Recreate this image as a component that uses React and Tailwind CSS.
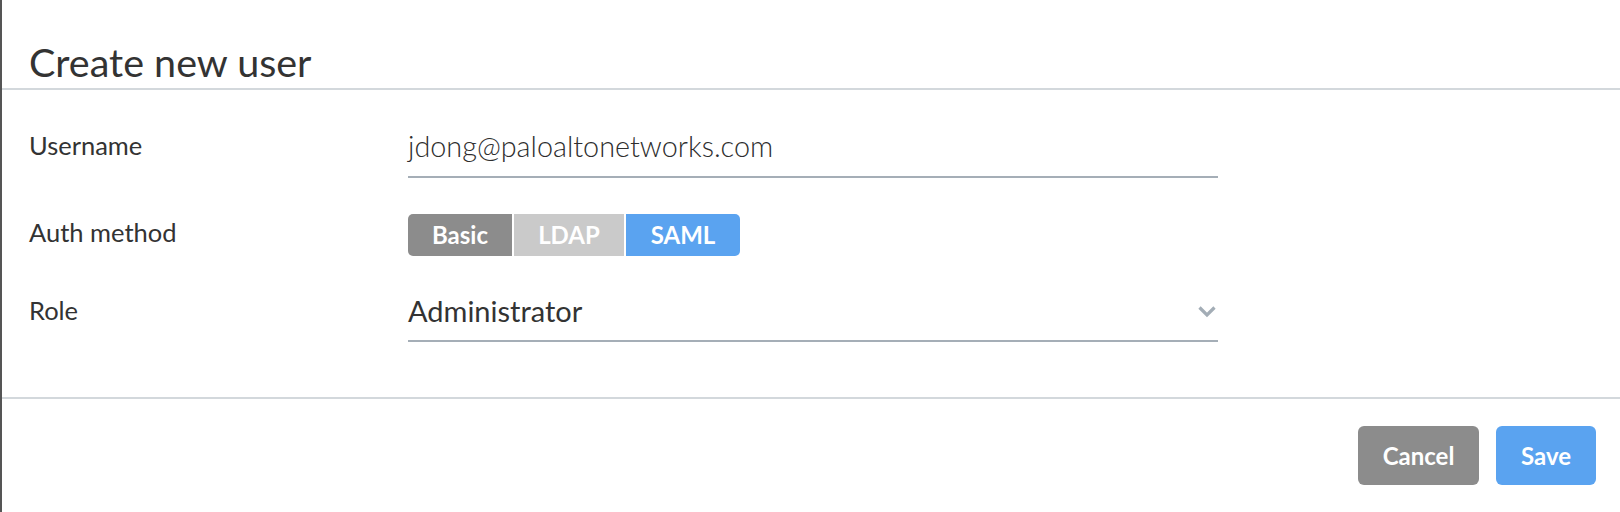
import React from "react";

function Chevron() {
  return (
    <svg width="20" height="13" viewBox="0 0 20 13" fill="none">
      <path d="M2.5 2.5 L10 10 L17.5 2.5" stroke="#a3adb6" strokeWidth="3.2" strokeLinecap="butt" strokeLinejoin="miter" />
    </svg>
  );
}

export default function App() {
  return (
    <div
      className="w-[1620px] h-[512px] bg-white border-l-2 border-[#555555] flex flex-col text-[#333333]"
      style={{ fontFamily: "Lato, 'Open Sans', sans-serif" }}
    >
      <div className="h-[90px] pt-[38px] pl-[27px] border-b-2 border-[#d3d8dc] shrink-0">
        <h1 className="text-[39.5px] leading-[47px] font-normal">Create new user</h1>
      </div>

      <div className="h-[309px] shrink-0 border-b-2 border-[#d3d8dc] pl-[27px] flex flex-col">
        <div className="mt-[38px] flex items-start">
          <div className="w-[379px] pt-[2px] text-[25.5px] leading-[31px]">Username</div>
          <div className="w-[810px] pt-[1px] pb-[12px] border-b-2 border-[#a5aeb7] text-[28.8px] leading-[35px] font-light text-[#2e2e2e]">
            jdong@paloaltonetworks.com
          </div>
        </div>

        <div className="mt-[36px] flex items-start">
          <div className="w-[379px] pt-[3px] text-[25.5px] leading-[31px]">Auth method</div>
          <div className="flex gap-[2px] h-[42px] text-white font-bold text-[24px]">
            <div className="w-[104px] flex items-center justify-center bg-[#8c8c8c] rounded-l-[5px]">Basic</div>
            <div className="w-[110px] flex items-center justify-center bg-[#cacaca]">LDAP</div>
            <div className="w-[114px] flex items-center justify-center bg-[#5aa3f0] rounded-r-[5px]">SAML</div>
          </div>
        </div>

        <div className="mt-[37px] flex items-start">
          <div className="w-[379px] pt-[2px] text-[25.5px] leading-[31px]">Role</div>
          <div className="w-[810px] pb-[12px] border-b-2 border-[#a5aeb7] flex items-center justify-between">
            <span className="text-[29px] leading-[35px]">Administrator</span>
            <span className="mr-[1px] mt-[2px] flex"><Chevron /></span>
          </div>
        </div>
      </div>

      <div className="flex justify-end gap-[17px] pt-[27px] pr-[24px]">
        <button className="w-[121px] h-[59px] rounded-[6px] bg-[#8c8c8c] text-white font-bold text-[24px]">Cancel</button>
        <button className="w-[100px] h-[59px] rounded-[6px] bg-[#5aa3f0] text-white font-bold text-[24px]">Save</button>
      </div>
    </div>
  );
}
